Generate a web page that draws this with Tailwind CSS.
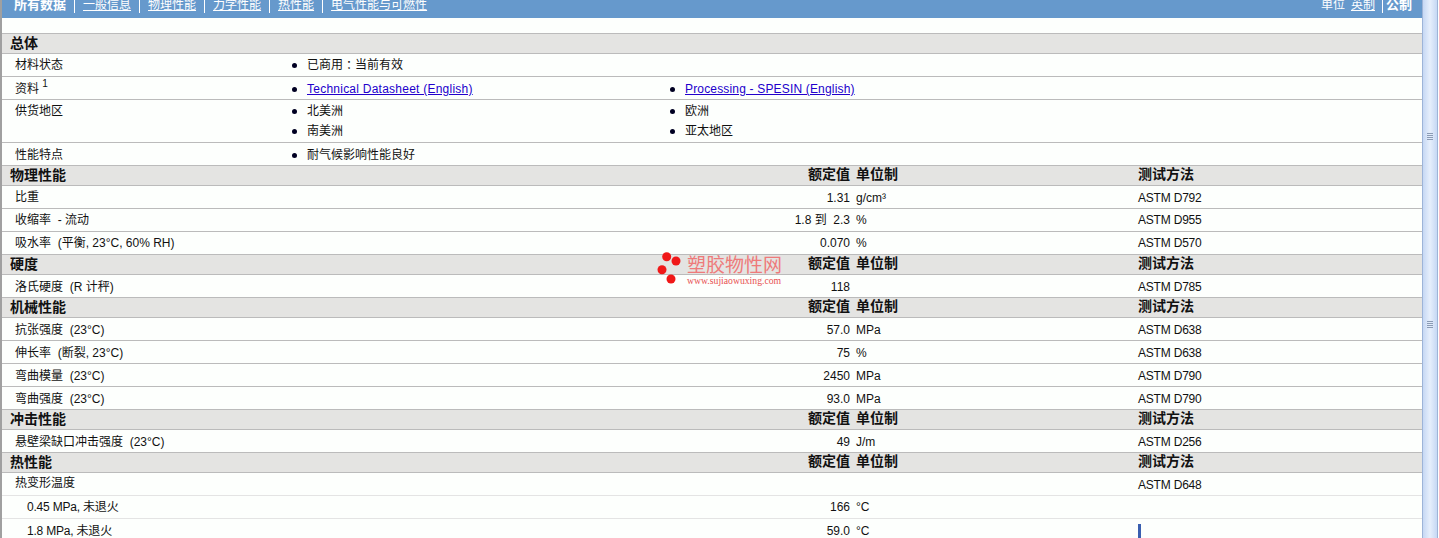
<!DOCTYPE html>
<html lang="zh-CN">
<head>
    <meta charset="UTF-8">
    <title>所有数据</title>
    <script src="https://cdn.jsdelivr.net/npm/@tailwindcss/browser@4"></script>
</head>
<body class="h-[538px] overflow-hidden bg-white text-[12px] leading-[16px] text-[#111] font-['Liberation_Sans','Noto_Sans_CJK_SC',sans-serif]">
<div class="relative flex h-[538px]">
    <!-- Main content -->
    <main class="w-[1422px] shrink-0 border-l-2 border-[#a0a0a0] bg-[#fdfffd]">
        <!-- Top nav -->
        <nav class="flex h-[18px] items-start justify-between bg-[#6699cc] pl-[12px] pr-[10px] text-white">
            <div class="-mt-[3px] flex items-center">
                <b class="pr-[8px] text-[13px]">所有数据</b>
                <a class="border-l border-white pl-[8px] pr-[8px] underline">一般信息</a>
                <a class="border-l border-white pl-[8px] pr-[8px] underline">物理性能</a>
                <a class="border-l border-white pl-[8px] pr-[8px] underline">力学性能</a>
                <a class="border-l border-white pl-[8px] pr-[8px] underline">热性能</a>
                <a class="border-l border-white pl-[8px] underline">电气性能与可燃性</a>
            </div>
            <div class="-mt-[3px] flex items-center">
                <span class="pr-[6px]">单位</span>
                <a class="pr-[7px] underline">英制</a>
                <b class="border-l border-white pl-[3px] text-[13px]">公制</b>
            </div>
        </nav>
        <div class="h-[15px]"></div>

        <!-- 总体 -->
        <div class="flex h-[21px] items-center border-y border-[#bbb] bg-[#e4e4e2] pb-[2px] pl-[8px] text-[14px] font-bold">总体</div>
        <div class="flex h-[23px] items-center border-b border-[#bbb]">
            <div class="w-[273px] pl-[13px]">材料状态</div>
            <div class="flex h-[16px] items-center gap-[10px] pl-[17px]"><i class="size-[5px] rounded-full bg-[#002]"></i><span class="flex h-[16px]"><span>已商用</span><span lang="zh-TW" class="font-['Noto_Sans_CJK_TC'] leading-[16px]">：</span><span>当前有效</span></span></div>
        </div>
        <div class="flex h-[23px] items-center border-b border-[#bbb] pt-[2px]">
            <div class="w-[273px] pl-[13px]">资料 <sup class="-top-[6px] text-[10px]">1</sup></div>
            <div class="flex w-[378px] items-center gap-[10px] pl-[17px]"><i class="size-[5px] rounded-full bg-[#002]"></i><a class="text-[#2200cc] underline tracking-[0.24px]">Technical Datasheet (English)</a></div>
            <div class="flex items-center gap-[10px] pl-[17px]"><i class="size-[5px] rounded-full bg-[#002]"></i><a class="text-[#2200cc] underline tracking-[0.17px]">Processing - SPESIN (English)</a></div>
        </div>
        <div class="flex h-[43px] border-b border-[#bbb] pt-[1px]">
            <div class="w-[273px] pl-[13px] pt-[2px]">供货地区</div>
            <div class="w-[378px] pl-[17px]">
                <div class="flex h-[20px] items-center gap-[10px]"><i class="size-[5px] rounded-full bg-[#002]"></i>北美洲</div>
                <div class="flex h-[20px] items-center gap-[10px]"><i class="size-[5px] rounded-full bg-[#002]"></i>南美洲</div>
            </div>
            <div class="pl-[17px]">
                <div class="flex h-[20px] items-center gap-[10px]"><i class="size-[5px] rounded-full bg-[#002]"></i>欧洲</div>
                <div class="flex h-[20px] items-center gap-[10px]"><i class="size-[5px] rounded-full bg-[#002]"></i>亚太地区</div>
            </div>
        </div>
        <div class="flex h-[23px] items-center border-b border-[#bbb] pt-[2px]">
            <div class="w-[273px] pl-[13px]">性能特点</div>
            <div class="flex items-center gap-[10px] pl-[17px]"><i class="size-[5px] rounded-full bg-[#002]"></i>耐气候影响性能良好</div>
        </div>

        <!-- 物理性能 -->
        <div class="flex h-[20px] items-center border-b border-[#bbb] bg-[#e4e4e2] text-[14px] font-bold"><div class="w-[806px] pb-[2px] pl-[8px]">物理性能</div><div class="w-[48px] pb-[4px]">额定值</div><div class="w-[282px] pb-[4px]">单位制</div><div class="pb-[4px]">测试方法</div></div>
        <div class="flex h-[23px] items-center border-b border-[#bbb]"><div class="w-[400px] pl-[13px]">比重</div><div class="w-[448px] pt-[2px] text-right">1.31</div><div class="w-[282px] pl-[6px] pt-[2px]">g/cm³</div><div class="pl-[6px] pt-[2px] tracking-[-0.2px]">ASTM D792</div></div>
        <div class="flex h-[23px] items-center border-b border-[#bbb]"><div class="w-[400px] pl-[13px]">收缩率&nbsp; - 流动</div><div class="w-[448px] text-right">1.8 到&nbsp; 2.3</div><div class="w-[282px] pl-[6px]">%</div><div class="pl-[6px] tracking-[-0.2px]">ASTM D955</div></div>
        <div class="flex h-[22px] items-center"><div class="w-[400px] pl-[13px]">吸水率&nbsp; (平衡, 23°C, 60% RH)</div><div class="w-[448px] text-right">0.070</div><div class="w-[282px] pl-[6px]">%</div><div class="pl-[6px] tracking-[-0.2px]">ASTM D570</div></div>

        <!-- 硬度 -->
        <div class="flex h-[21px] items-center border-y border-[#bbb] bg-[#e4e4e2] text-[14px] font-bold"><div class="w-[806px] pb-[2px] pl-[8px]">硬度</div><div class="w-[48px] pb-[4px]">额定值</div><div class="w-[282px] pb-[4px]">单位制</div><div class="pb-[4px]">测试方法</div></div>
        <div class="flex h-[22px] items-center pt-[2px]"><div class="w-[400px] pl-[13px]">洛氏硬度&nbsp; (R 计秤)</div><div class="w-[448px] text-right">118</div><div class="w-[282px] pl-[6px]"></div><div class="pl-[6px] tracking-[-0.2px]">ASTM D785</div></div>

        <!-- 机械性能 -->
        <div class="flex h-[21px] items-center border-y border-[#bbb] bg-[#e4e4e2] text-[14px] font-bold"><div class="w-[806px] pb-[2px] pl-[8px]">机械性能</div><div class="w-[48px] pb-[4px]">额定值</div><div class="w-[282px] pb-[4px]">单位制</div><div class="pb-[4px]">测试方法</div></div>
        <div class="flex h-[23px] items-center border-b border-[#bbb] pt-[2px]"><div class="w-[400px] pl-[13px]">抗张强度&nbsp; (23°C)</div><div class="w-[448px] text-right">57.0</div><div class="w-[282px] pl-[6px]">MPa</div><div class="pl-[6px] tracking-[-0.2px]">ASTM D638</div></div>
        <div class="flex h-[23px] items-center border-b border-[#bbb] pt-[2px]"><div class="w-[400px] pl-[13px]">伸长率&nbsp; (断裂, 23°C)</div><div class="w-[448px] text-right">75</div><div class="w-[282px] pl-[6px]">%</div><div class="pl-[6px] tracking-[-0.2px]">ASTM D638</div></div>
        <div class="flex h-[23px] items-center border-b border-[#bbb] pt-[2px]"><div class="w-[400px] pl-[13px]">弯曲模量&nbsp; (23°C)</div><div class="w-[448px] text-right">2450</div><div class="w-[282px] pl-[6px]">MPa</div><div class="pl-[6px] tracking-[-0.2px]">ASTM D790</div></div>
        <div class="flex h-[22px] items-center pt-[2px]"><div class="w-[400px] pl-[13px]">弯曲强度&nbsp; (23°C)</div><div class="w-[448px] text-right">93.0</div><div class="w-[282px] pl-[6px]">MPa</div><div class="pl-[6px] tracking-[-0.2px]">ASTM D790</div></div>

        <!-- 冲击性能 -->
        <div class="flex h-[21px] items-center border-y border-[#bbb] bg-[#e4e4e2] text-[14px] font-bold"><div class="w-[806px] pb-[2px] pl-[8px]">冲击性能</div><div class="w-[48px] pb-[4px]">额定值</div><div class="w-[282px] pb-[4px]">单位制</div><div class="pb-[4px]">测试方法</div></div>
        <div class="flex h-[22px] items-center pt-[2px]"><div class="w-[400px] pl-[13px]">悬壁梁缺口冲击强度&nbsp; (23°C)</div><div class="w-[448px] text-right">49</div><div class="w-[282px] pl-[6px]">J/m</div><div class="pl-[6px] tracking-[-0.2px]">ASTM D256</div></div>

        <!-- 热性能 -->
        <div class="flex h-[21px] items-center border-y border-[#bbb] bg-[#e4e4e2] text-[14px] font-bold"><div class="w-[806px] pb-[2px] pl-[8px]">热性能</div><div class="w-[48px] pb-[4px]">额定值</div><div class="w-[282px] pb-[4px]">单位制</div><div class="pb-[4px]">测试方法</div></div>
        <div class="flex h-[23px] items-center border-b border-[#e4e4e4]"><div class="w-[400px] pb-[2px] pl-[13px]">热变形温度</div><div class="w-[448px]"></div><div class="w-[282px]"></div><div class="pl-[6px] pt-[2px] tracking-[-0.2px]">ASTM D648</div></div>
        <div class="flex h-[23px] items-center border-b border-[#e4e4e4]"><div class="w-[400px] pl-[25px] tracking-[-0.2px]">0.45 MPa, 未退火</div><div class="w-[448px] text-right">166</div><div class="w-[282px] pl-[6px]">°C</div></div>
        <div class="flex h-[23px] items-center"><div class="w-[400px] pl-[25px] tracking-[-0.2px]">1.8 MPa, 未退火</div><div class="w-[448px] text-right">59.0</div><div class="w-[282px] pl-[6px]">°C</div><div class="ml-[6px] h-[18px] w-[3px] self-end bg-[#3a5fb0]"></div></div>
    </main>

    <!-- Scrollbar -->
    <aside class="mr-[1px] flex flex-1 flex-col items-center gap-[181px] border-x border-[#9db4d8] bg-gradient-to-r from-[#c6d8f4] via-[#e6effc] to-[#c6d8f4] pt-[133px]">
        <div class="flex w-[6px] flex-col gap-[1px]"><i class="h-[1px] bg-[#8a9bb5]"></i><i class="h-[1px] bg-[#8a9bb5]"></i><i class="h-[1px] bg-[#8a9bb5]"></i><i class="h-[1px] bg-[#8a9bb5]"></i></div>
        <div class="flex w-[6px] flex-col gap-[1px]"><i class="h-[1px] bg-[#8a9bb5]"></i><i class="h-[1px] bg-[#8a9bb5]"></i><i class="h-[1px] bg-[#8a9bb5]"></i><i class="h-[1px] bg-[#8a9bb5]"></i></div>
    </aside>

    <!-- Watermark -->
    <div class="absolute left-[656px] top-[250px] flex items-start">
        <svg width="30" height="36" viewBox="0 0 30 36"><circle cx="10.7" cy="6.7" r="4.5" fill="#f01818"/><circle cx="20" cy="11" r="4.5" fill="#f01818"/><circle cx="6" cy="19.7" r="4.5" fill="#f01818"/><circle cx="15" cy="29" r="4.5" fill="#f01818"/></svg>
        <div class="ml-[1px] flex flex-col pt-[6px]">
            <span class="text-[19px] leading-[20px] text-[#ee7a7a]">塑胶物性网</span>
            <span class="font-['Liberation_Serif',serif] text-[9.7px] leading-[9px] text-[#e85050]">www.sujiaowuxing.com</span>
        </div>
    </div>
</div>
</body>
</html>
